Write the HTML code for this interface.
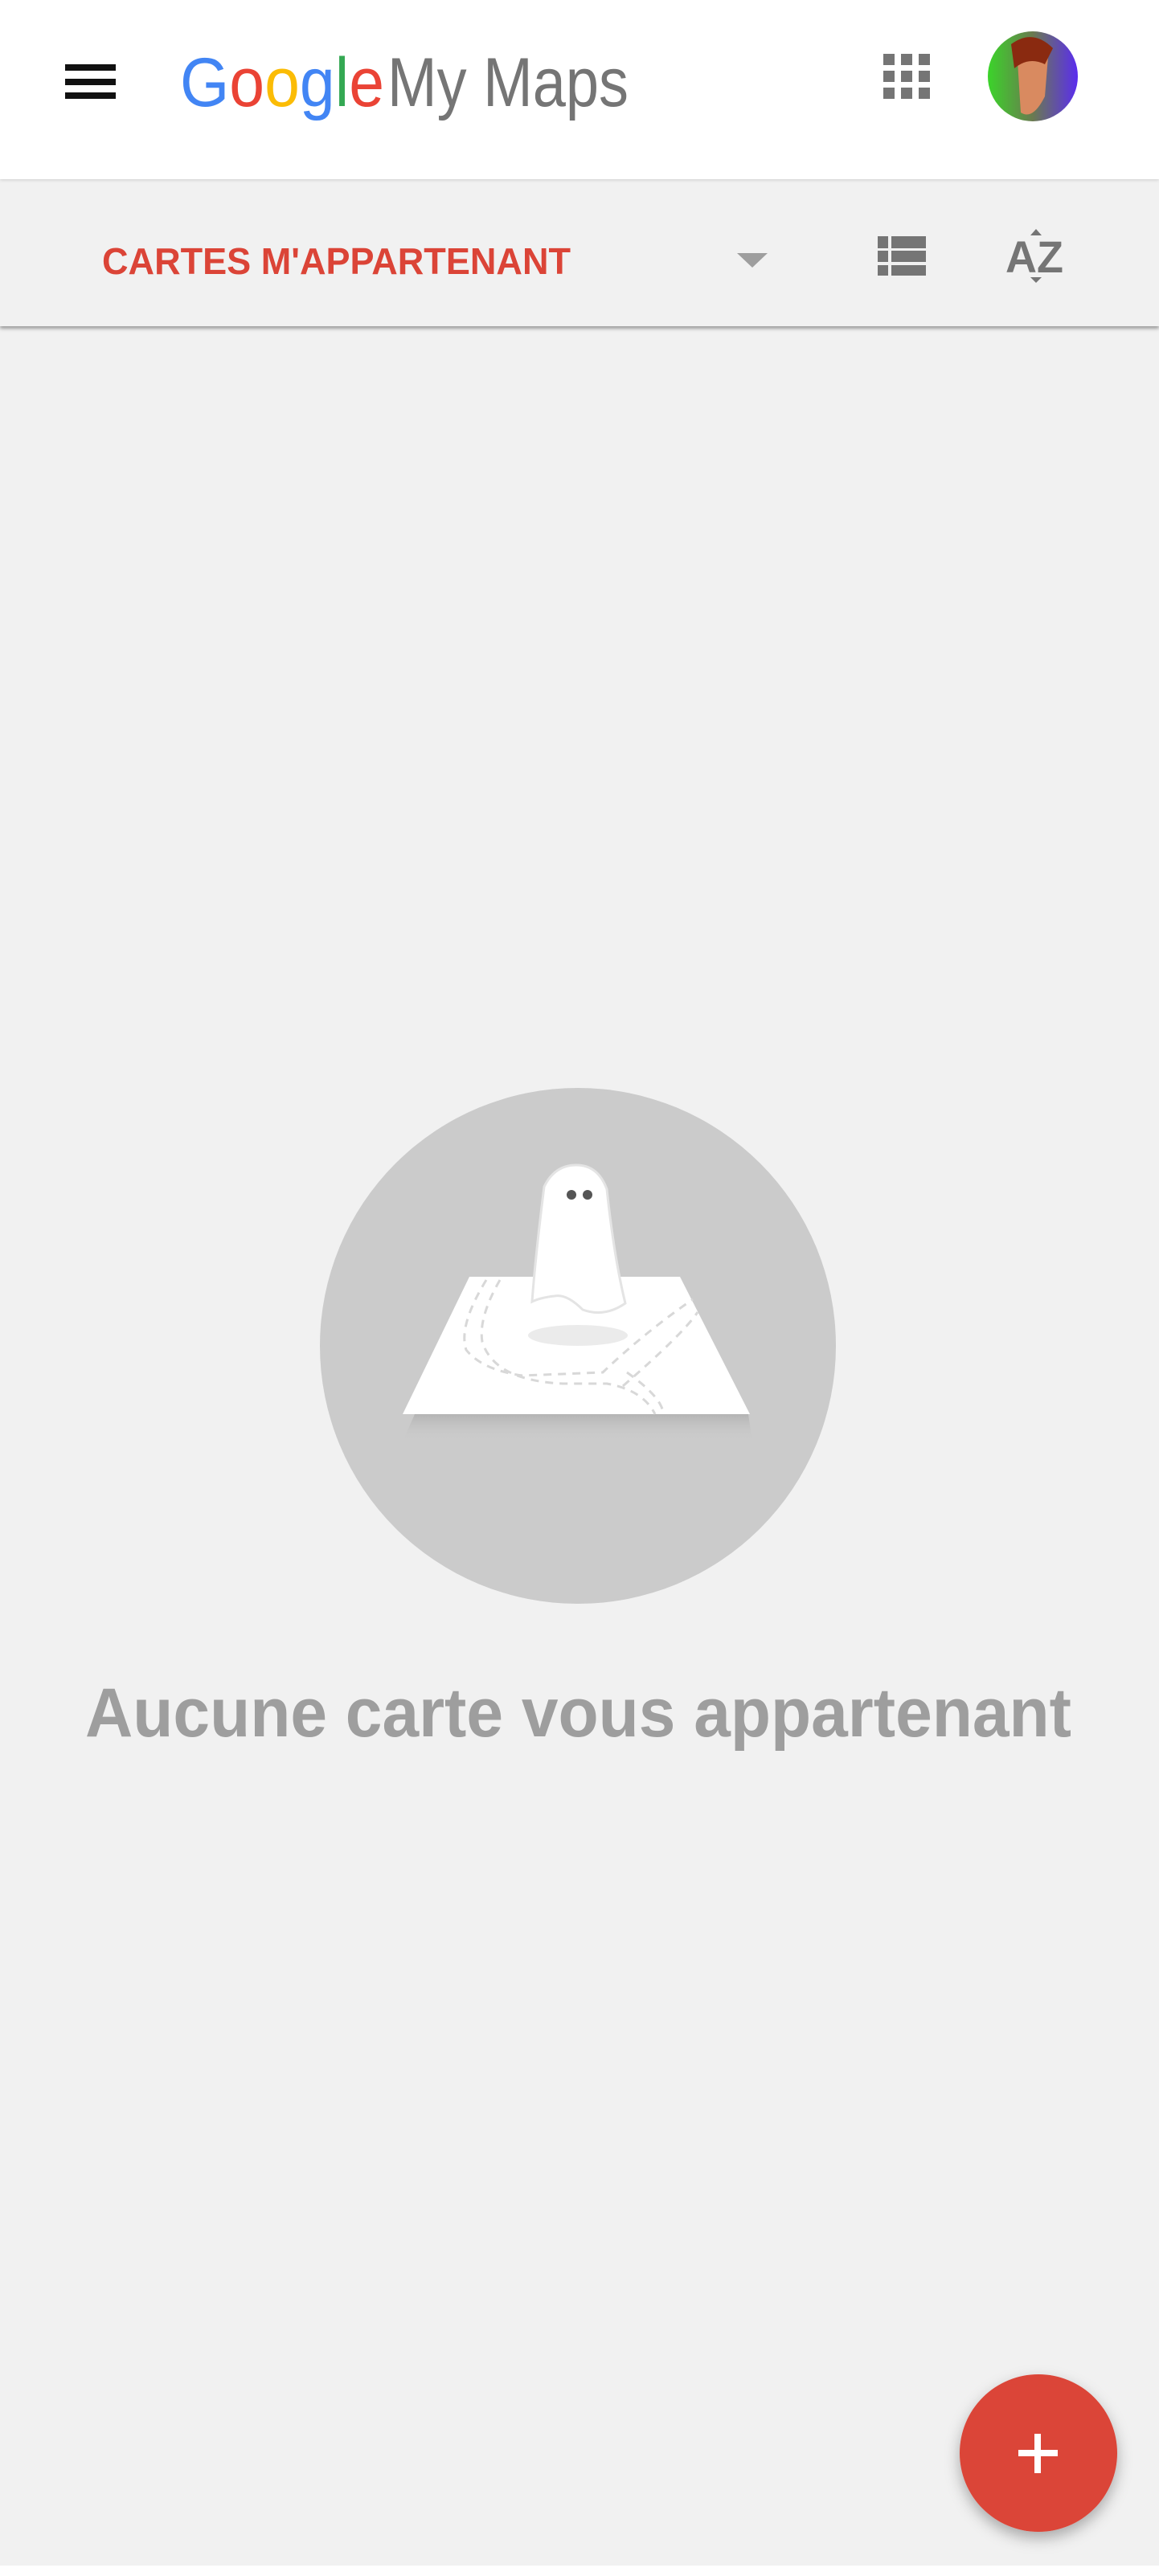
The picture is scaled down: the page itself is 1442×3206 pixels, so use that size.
<!DOCTYPE html>
<html><head><meta charset="utf-8"><style>
html,body{margin:0;padding:0}
body{width:1442px;height:3206px;background:#f1f1f1;position:relative;overflow:hidden;font-family:"Liberation Sans",sans-serif}
.hdr{position:absolute;left:0;top:0;width:1442px;height:223px;background:#fff;z-index:2;box-shadow:0 1px 4px rgba(0,0,0,.15)}
.bar{position:absolute;left:0;top:223px;width:1442px;height:183px;background:#f1f1f1;box-shadow:0 3px 4px rgba(0,0,0,.35);z-index:1}
svg{position:absolute;left:0;top:0}
</style></head><body>
<div class="hdr">
<svg width="1442" height="223">
<rect x="81" y="80" width="63" height="8" fill="#111"/>
<rect x="81" y="98" width="63" height="8" fill="#111"/>
<rect x="81" y="115" width="63" height="8" fill="#111"/>
<text y="132" font-size="86" font-family="Liberation Sans" textLength="254" lengthAdjust="spacingAndGlyphs" x="224"><tspan fill="#4285f4">G</tspan><tspan fill="#ea4335">o</tspan><tspan fill="#fbbc05">o</tspan><tspan fill="#4285f4">g</tspan><tspan fill="#34a853">l</tspan><tspan fill="#ea4335">e</tspan></text>
<text x="482" y="132" font-size="86" fill="#757575" font-family="Liberation Sans" textLength="300" lengthAdjust="spacingAndGlyphs">My Maps</text>
<g fill="#757575">
<rect x="1099" y="67" width="14" height="14"/><rect x="1121" y="67" width="14" height="14"/><rect x="1143" y="67" width="14" height="14"/>
<rect x="1099" y="88" width="14" height="14"/><rect x="1121" y="88" width="14" height="14"/><rect x="1143" y="88" width="14" height="14"/>
<rect x="1099" y="109" width="14" height="14"/><rect x="1121" y="109" width="14" height="14"/><rect x="1143" y="109" width="14" height="14"/>
</g>
<defs><linearGradient id="av" x1="0" y1="0" x2="1" y2="0"><stop offset="0" stop-color="#3bd42a"/><stop offset=".5" stop-color="#6a7a50"/><stop offset="1" stop-color="#5a2cf0"/></linearGradient></defs>
<circle cx="1285" cy="95" r="56" fill="url(#av)"/>
<path d="M1265 60 Q1285 42 1305 58 L1300 120 Q1285 150 1270 140 Z" fill="#d98a60"/>
<path d="M1258 55 Q1285 35 1310 60 L1300 80 Q1280 70 1262 85 Z" fill="#8a2a10"/>
</svg>
</div>
<div class="bar">
<svg width="1442" height="183">
<text x="127" y="118" font-size="46" fill="#db4437" font-weight="bold" font-family="Liberation Sans" textLength="583" lengthAdjust="spacingAndGlyphs">CARTES M'APPARTENANT</text>
<path d="M917 92 L955 92 L936 110 Z" fill="#9e9e9e"/>
<g fill="#757575">
<rect x="1092" y="71" width="13" height="15"/><rect x="1109" y="71" width="43" height="15"/>
<rect x="1092" y="89" width="13" height="14"/><rect x="1109" y="89" width="43" height="14"/>
<rect x="1092" y="107" width="13" height="13"/><rect x="1109" y="107" width="43" height="13"/>
<path d="M1282 70 L1296 70 L1289 62 Z"/><path d="M1282 122 L1296 122 L1289 129 Z"/>
</g>
<text x="1251" y="116" font-size="56" fill="#757575" font-weight="bold" font-family="Liberation Sans" textLength="72" lengthAdjust="spacingAndGlyphs">AZ</text>
</svg>
</div>
<svg width="1442" height="3206" style="z-index:0">
<defs>
<linearGradient id="sh" x1="0" y1="0" x2="0" y2="1"><stop offset="0" stop-color="#b4b4b4"/><stop offset="1" stop-color="#cbcbcb" stop-opacity="0"/></linearGradient>
<filter id="fs" x="-50%" y="-50%" width="200%" height="200%"><feDropShadow dx="0" dy="8" stdDeviation="9" flood-color="#000" flood-opacity=".3"/></filter>
</defs>
<circle cx="719" cy="1675" r="321" fill="#cbcbcb"/>
<path d="M516 1760 L931 1760 L936 1794 L501 1794 Z" fill="url(#sh)"/>
<path d="M584 1589 L846 1589 L933 1760 L501 1760 Z" fill="#fff"/>
<path d="M662 1620 Q666 1565 677 1477 Q690 1450 717 1450 Q744 1450 755 1480 Q764 1565 778 1622 Q752 1640 725 1630 Q705 1610 690 1613 Q672 1615 662 1620 Z" fill="#fff" stroke="#e4e4e4" stroke-width="3"/>
<ellipse cx="719" cy="1662" rx="62" ry="13" fill="#ebebeb"/>
<circle cx="711" cy="1487" r="6" fill="#555"/><circle cx="731" cy="1487" r="6" fill="#555"/>
<g fill="none" stroke="#d8d8d8" stroke-width="3" stroke-dasharray="10 8">
<path d="M605 1593 Q570 1650 580 1680 Q600 1705 650 1712 L750 1708 Q800 1660 862 1617"/>
<path d="M622 1593 Q595 1640 600 1670 Q615 1718 700 1722 L755 1722 Q800 1730 815 1760"/>
<path d="M775 1725 Q850 1660 868 1633"/>
<path d="M780 1708 Q825 1740 825 1760"/>
</g>
<text x="106" y="2161" font-size="86" fill="#9e9e9e" font-family="Liberation Sans" font-weight="bold" textLength="1227" lengthAdjust="spacingAndGlyphs">Aucune carte vous appartenant</text>
<circle cx="1292" cy="3053" r="98" fill="#db4437" filter="url(#fs)"/>
<rect x="1267" y="3049" width="49" height="8" fill="#fff"/>
<rect x="1287" y="3029" width="8" height="49" fill="#fff"/>
<rect x="0" y="3193" width="1442" height="13" fill="#fff"/>
</svg>
</body></html>
